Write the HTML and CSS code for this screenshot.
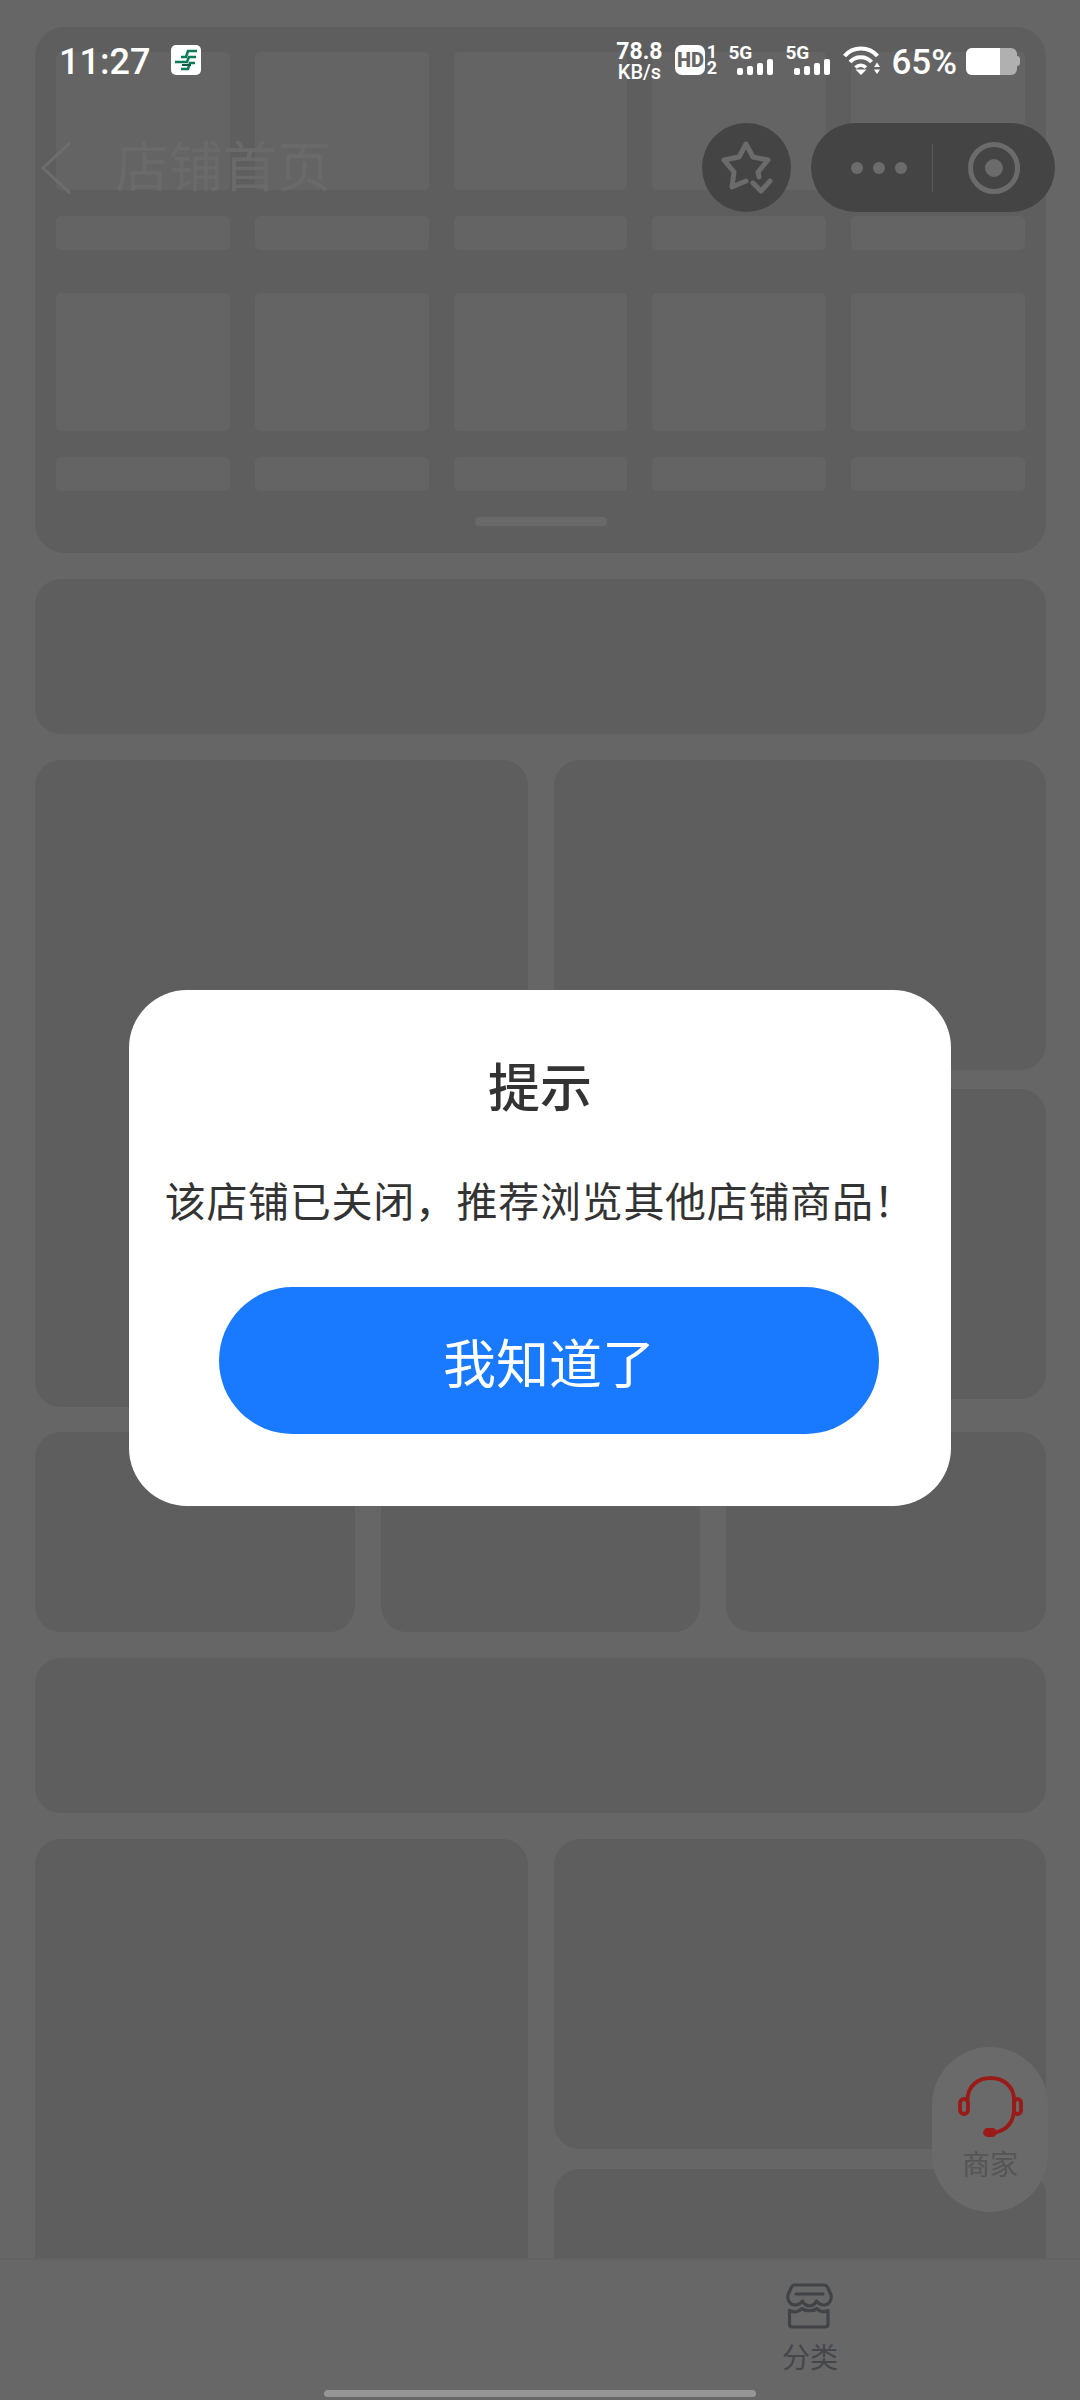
FILE: index.html
```html
<!DOCTYPE html>
<html lang="zh-CN">
<head>
    <meta charset="UTF-8">
    <meta name="viewport" content="width=device-width, initial-scale=1.0">
    <title>店铺首页</title>
    <link rel="stylesheet" href="styles.css">
</head>
<body>

<div class="page">
    <!-- Loading skeleton -->
    <main class="skeleton">
        <section class="panel">
            <div class="tile-grid">
                <div class="tile tile-big"></div><div class="tile tile-big"></div><div class="tile tile-big"></div><div class="tile tile-big"></div><div class="tile tile-big"></div>
                <div class="tile tile-label"></div><div class="tile tile-label"></div><div class="tile tile-label"></div><div class="tile tile-label"></div><div class="tile tile-label"></div>
            </div>
            <div class="tile-grid">
                <div class="tile tile-big"></div><div class="tile tile-big"></div><div class="tile tile-big"></div><div class="tile tile-big"></div><div class="tile tile-big"></div>
                <div class="tile tile-label"></div><div class="tile tile-label"></div><div class="tile tile-label"></div><div class="tile tile-label"></div><div class="tile tile-label"></div>
            </div>
            <div class="panel-indicator"></div>
        </section>

        <div class="block strip"></div>

        <div class="split">
            <div class="block tall"></div>
            <div class="stack">
                <div class="block half"></div>
                <div class="block half"></div>
            </div>
        </div>

        <div class="three">
            <div class="block"></div>
            <div class="block"></div>
            <div class="block"></div>
        </div>

        <div class="block strip"></div>

        <div class="split">
            <div class="block tall-cut"></div>
            <div class="stack stack-last">
                <div class="block half"></div>
                <div class="block half-cut"></div>
            </div>
        </div>
    </main>

    <!-- Bottom tabs -->
    <nav class="tabbar">
        <div class="tab"></div>
        <div class="tab">
            <svg class="tab-icon" viewBox="0 0 47 46" fill="none" stroke="#414347" stroke-width="3.2" stroke-linecap="round" stroke-linejoin="round">
                <path d="M8 2H38C40 2 41 3 42 5L45 12C46 17 43 22 38 22C35 22 32 20 30.500 18C29 21 26 23 23.500 23C21 23 18 21 16.500 18C15 20 12 22 9 22C4 22 1 17 2 12L5 5C6 3 7 2 8 2Z"/>
                <path d="M10 11H37"/>
                <path d="M3.500 27.500V41C3.500 43 4.500 44 6.500 44H39C41 44 42 43 42 41V27.500C38 29.500 34 29 31 25.500C28 28.500 19 28.500 16 25.500C12 29 9 30 3.500 27.500Z"/>
            </svg>
            <span class="tab-label">分类</span>
        </div>
    </nav>

    <!-- Status bar -->
    <header class="statusbar">
        <div class="status-left">
            <span class="clock">11:27</span>
            <svg class="post-logo" viewBox="0 0 30 30">
                <rect width="30" height="30" rx="5" fill="#fff"/>
                <g fill="none" stroke="#0f7a58" stroke-width="2.6">
                    <path d="M10 12H15L17 6H26"/>
                    <path d="M4 17H16L18 12H25"/>
                    <path d="M10 24H17L19 18H24"/>
                </g>
                <path d="M11 20H20" stroke="#0b5d44" stroke-width="2"/>
            </svg>
        </div>
        <div class="status-right">
            <div class="speed"><span class="speed-num">78.8</span><span class="speed-unit">KB/s</span></div>
            <div class="hd">
                <span class="hd-box">HD</span>
                <span class="hd-slots"><span>1</span><span>2</span></span>
            </div>
            <div class="signal">
                <span class="signal-type">5G</span>
                <div class="bars"><i class="b1"></i><i class="b2"></i><i class="b3"></i><i class="b4"></i></div>
            </div>
            <div class="signal">
                <span class="signal-type">5G</span>
                <div class="bars"><i class="b1"></i><i class="b2"></i><i class="b3"></i><i class="b4"></i></div>
            </div>
            <svg class="wifi" viewBox="0 0 37 29" fill="none" stroke="#fff" stroke-width="4">
                <path d="M1.500 10C10 0 26 0 34.500 10"/>
                <path d="M7 16C12.500 9.500 23 9.500 28.500 16"/>
                <path d="M12.500 21.500C15.500 18.500 20 18.500 23 21.500" stroke-width="3.500"/>
                <path d="M12.500 23.500H23.500L18 29Z" fill="#fff" stroke="none"/>
                <path d="M31 21H37L34 16.500Z M31 23.500H37L34 28Z" fill="#fff" stroke="none"/>
            </svg>
            <span class="battery-text">65%</span>
            <div class="battery"><div class="battery-fill"></div></div>
        </div>
    </header>

    <!-- Page title and capsule -->
    <div class="navbar">
        <div class="nav-left">
            <svg class="back" viewBox="0 0 30 52" fill="none" stroke="#6d6d6d" stroke-width="3">
                <path d="M29 1L2 26L29 51"/>
            </svg>
            <span class="nav-title">店铺首页</span>
        </div>
        <div class="nav-right">
            <div class="fav">
                <svg class="fav-star" viewBox="0 0 52 56" fill="none" stroke="#6b6b6b" stroke-width="5" stroke-linejoin="round" stroke-linecap="round">
                    <path d="M25 41L11 47L13 32L3 20L18 17L25 4L32 17L47 20L37 32L38 37"/>
                    <path d="M32 43L40 51L49 41"/>
                </svg>
            </div>
            <div class="capsule">
                <div class="capsule-more"><i></i><i></i><i></i></div>
                <div class="capsule-line"></div>
                <div class="capsule-target"><i></i></div>
            </div>
        </div>
    </div>

    <!-- Merchant button -->
    <div class="merchant">
        <svg class="headset" viewBox="0 0 66 62" fill="none" stroke="#991b18" stroke-width="3.800" stroke-linecap="round">
            <path d="M10.500 24C10.500 10 21 2 33.500 2C46 2 57 10 57 24V32C57 46 50 54 38 56.500"/>
            <rect x="3" y="23" width="8" height="15" rx="4"/>
            <rect x="57" y="23" width="7" height="15" rx="3.500"/>
            <rect x="28" y="54" width="10" height="5" rx="2.500" fill="#991b18"/>
        </svg>
        <span class="merchant-label">商家</span>
    </div>

    <div class="home-bar"></div>

    <!-- Dialog -->
    <div class="modal">
        <h2 class="modal-title">提示</h2>
        <p class="modal-text">该店铺已关闭，推荐浏览其他店铺商品！</p>
        <button class="modal-btn" type="button">我知道了</button>
    </div>
</div>

</body>
</html>
```

FILE: styles.css
```css
* {
    box-sizing: border-box;
}

html, body {
    margin: 0;
    padding: 0;
}

body {
    font-family: "Noto Sans CJK SC", "Noto Sans", sans-serif;
    background-color: #666666;
}

.page {
    position: relative;
    width: 1080px;
    height: 2400px;
    overflow: hidden;
    display: flex;
    flex-direction: column;
    background-color: #666666;
}

/* skeleton */
.skeleton {
    flex: 1;
    min-height: 0;
    overflow: hidden;
    padding: 27px 34px 0 35px;
    display: flex;
    flex-direction: column;
}

.panel {
    height: 526px;
    padding: 25px 21px 0;
    background-color: #5e5e5e;
    border-radius: 30px;
    flex-shrink: 0;
}

.tile-grid {
    display: grid;
    grid-template-columns: repeat(5, 1fr);
    gap: 26px 25px;
    margin-bottom: 43px;
}

.tile {
    background-color: #646464;
    border-radius: 5px;
}

.tile-big {
    height: 138px;
}

.tile-label {
    height: 34px;
}

.panel-indicator {
    width: 132px;
    height: 9px;
    margin: -17px auto 0;
    background-color: #696969;
    border-radius: 4px;
}

.block {
    background-color: #5e5e5e;
    border-radius: 26px;
}

.strip {
    height: 155px;
    flex-shrink: 0;
    margin-top: 26px;
}

.split {
    display: grid;
    grid-template-columns: 1fr 1fr;
    gap: 26px;
    margin-top: 26px;
    flex-shrink: 0;
}

.stack {
    display: flex;
    flex-direction: column;
    gap: 19px;
}

.stack-last {
    gap: 20px;
}

.tall {
    height: 647px;
}

.half {
    height: 310px;
}

.tall-cut, .half-cut {
    border-radius: 26px 26px 0 0;
}

.tall-cut {
    height: 419px;
}

.half-cut {
    height: 100px;
}

.three {
    display: grid;
    grid-template-columns: repeat(3, 1fr);
    gap: 26px;
    height: 200px;
    margin-top: 25px;
    flex-shrink: 0;
}

/* tabs */
.tabbar {
    height: 142px;
    flex-shrink: 0;
    display: grid;
    grid-template-columns: 1fr 1fr;
    background-color: #676767;
    border-top: 2px solid #626262;
}

.tab {
    display: flex;
    flex-direction: column;
    align-items: center;
    padding-top: 23px;
}

.tab-icon {
    width: 47px;
    height: 46px;
    margin-right: 2px;
}

.tab-label {
    margin-top: 10px;
    font-size: 28px;
    line-height: 34px;
    color: #44464a;
}

/* status bar */
.statusbar {
    position: absolute;
    top: 0;
    left: 0;
    width: 1080px;
    height: 90px;
    padding: 42px 63px 0 59px;
    display: flex;
    justify-content: space-between;
    color: #fff;
    font-family: Roboto, "Noto Sans", sans-serif;
}

.status-left {
    display: flex;
    align-items: flex-start;
    gap: 21px;
}

.clock {
    font-size: 36px;
    font-weight: 500;
    line-height: 36px;
    margin-top: 2px;
}

.post-logo {
    width: 30px;
    height: 30px;
    margin-top: 3px;
}

.status-right {
    display: flex;
    align-items: flex-start;
}

.speed {
    width: 48px;
    display: flex;
    flex-direction: column;
    align-items: center;
    font-weight: 700;
    margin-right: 12px;
}

.speed-num {
    font-size: 23px;
    line-height: 20px;
}

.speed-unit {
    font-size: 20px;
    font-weight: 500;
    line-height: 17px;
    margin-top: 2px;
}

.hd {
    display: flex;
    margin-top: 3px;
    margin-right: 10px;
}

.hd-box {
    width: 30px;
    height: 30px;
    background-color: #fff;
    color: #666;
    border-radius: 7px;
    font-size: 20px;
    font-weight: 900;
    line-height: 30px;
    text-align: center;
}

.hd-slots {
    width: 13px;
    display: flex;
    flex-direction: column;
    justify-content: space-between;
    align-items: center;
    font-size: 18px;
    font-weight: 700;
    line-height: 14px;
}

.signal {
    position: relative;
    width: 45px;
    height: 30px;
    margin-top: 3px;
    margin-right: 12px;
}

.signal-type {
    display: block;
    font-size: 19px;
    font-weight: 700;
    line-height: 16px;
}

.bars {
    position: absolute;
    right: 0;
    bottom: 0;
    display: flex;
    align-items: flex-end;
    gap: 4px;
}

.bars i {
    display: block;
    width: 6px;
    background-color: #fff;
    border-radius: 2px;
}

.bars .b1 {
    height: 7px;
}

.bars .b2 {
    height: 9px;
}

.bars .b3 {
    height: 12px;
}

.bars .b4 {
    height: 16px;
}

.wifi {
    width: 37px;
    height: 29px;
    margin-top: 4px;
    margin-left: 1px;
}

.battery-text {
    font-size: 35px;
    font-weight: 500;
    line-height: 36px;
    margin-left: 11px;
    margin-top: 3px;
}

.battery {
    position: relative;
    width: 51px;
    height: 27px;
    margin-top: 6px;
    margin-left: 9px;
    background-color: #b0b0b0;
    border-radius: 6px;
}

.battery::after {
    content: "";
    position: absolute;
    top: 8px;
    right: -3px;
    width: 3px;
    height: 10px;
    background-color: #b0b0b0;
    border-radius: 0 3px 3px 0;
}

.battery-fill {
    width: 34px;
    height: 27px;
    background-color: #fff;
    border-radius: 6px 0 0 6px;
}

/* nav bar */
.navbar {
    position: absolute;
    top: 123px;
    left: 0;
    width: 1080px;
    height: 89px;
    padding: 0 25px 0 41px;
    display: flex;
    justify-content: space-between;
    align-items: center;
}

.nav-left {
    display: flex;
    align-items: center;
    gap: 44px;
}

.back {
    width: 30px;
    height: 52px;
}

.nav-title {
    font-size: 54px;
    line-height: 60px;
    margin-bottom: 8px;
    color: #6a6a6a;
}

.nav-right {
    display: flex;
    gap: 20px;
}

.fav {
    width: 89px;
    height: 89px;
    background-color: #444444;
    border-radius: 50%;
    display: flex;
    align-items: center;
    justify-content: center;
}

.fav-star {
    width: 52px;
    height: 56px;
}

.capsule {
    width: 244px;
    height: 89px;
    background-color: #444444;
    border-radius: 45px;
    display: flex;
    align-items: center;
}

.capsule-more {
    width: 121px;
    display: flex;
    justify-content: flex-end;
    gap: 10px;
    padding-right: 25px;
}

.capsule-more i {
    display: block;
    width: 12px;
    height: 12px;
    background-color: #6b6b6b;
    border-radius: 50%;
}

.capsule-line {
    width: 1px;
    height: 48px;
    background-color: #5a5a5a;
}

.capsule-target {
    width: 52px;
    height: 52px;
    margin-left: 35px;
    border: 5px solid #6b6b6b;
    border-radius: 50%;
    display: flex;
    align-items: center;
    justify-content: center;
}

.capsule-target i {
    display: block;
    width: 18px;
    height: 18px;
    background-color: #6b6b6b;
    border-radius: 50%;
}

/* merchant button */
.merchant {
    position: absolute;
    top: 2047px;
    left: 932px;
    width: 116px;
    height: 165px;
    padding-top: 29px;
    background-color: #6a6a6a;
    border-radius: 58px;
    display: flex;
    flex-direction: column;
    align-items: center;
}

.headset {
    width: 66px;
    height: 62px;
}

.merchant-label {
    font-size: 28px;
    line-height: 34px;
    margin-top: 8px;
    color: #555555;
}

.home-bar {
    position: absolute;
    top: 2390px;
    left: 324px;
    width: 432px;
    height: 7px;
    background-color: #959595;
    border-radius: 4px;
}

/* dialog */
.modal {
    position: absolute;
    top: 990px;
    left: 129px;
    width: 822px;
    height: 516px;
    padding-top: 55px;
    background-color: #fff;
    border-radius: 58px;
    display: flex;
    flex-direction: column;
    align-items: center;
}

.modal-title {
    margin: 0;
    font-size: 52px;
    font-weight: 500;
    line-height: 80px;
    color: #333333;
}

.modal-text {
    margin: 44px 0 0;
    font-size: 41px;
    letter-spacing: 0.7px;
    line-height: 60px;
    white-space: nowrap;
    color: #333333;
}

.modal-btn {
    width: 660px;
    height: 147px;
    margin-top: 58px;
    margin-left: 18px;
    background-color: #1a7aff;
    color: white;
    border: none;
    border-radius: 74px;
    font-family: inherit;
    font-size: 53px;
    cursor: pointer;
}
```
